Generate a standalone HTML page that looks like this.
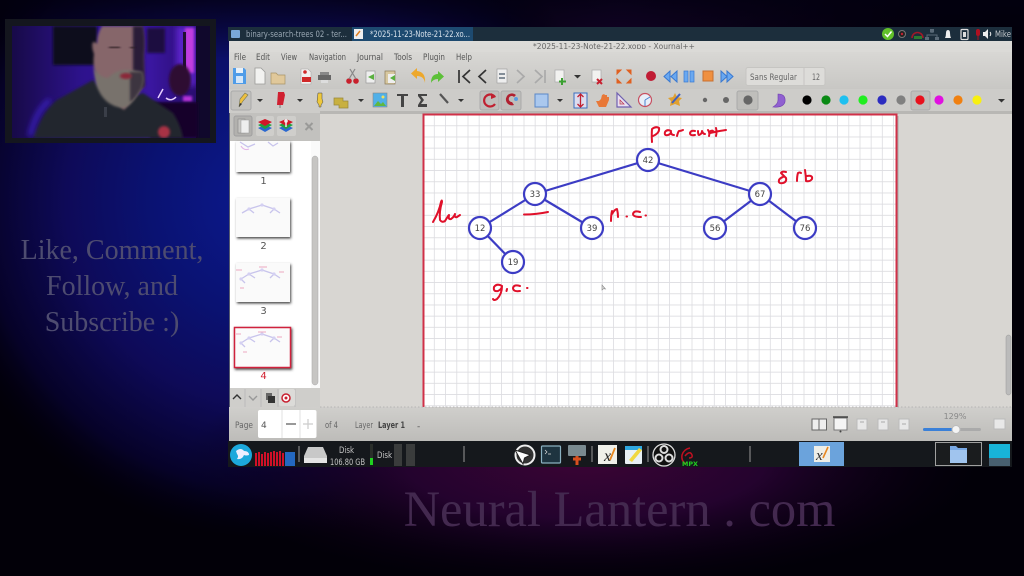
<!DOCTYPE html>
<html><head><meta charset="utf-8"><style>
html,body{margin:0;padding:0;background:#000;width:1024px;height:576px;overflow:hidden}
svg{display:block;position:absolute;left:0;top:0;filter:blur(.35px)}
text{font-family:"DejaVu Sans",sans-serif}
.ui{font-size:9px;fill:#555}
.n{font-size:8.5px;fill:#444;text-anchor:middle}
.h{fill:none;stroke:#e0102a;stroke-width:2;stroke-linecap:round;stroke-linejoin:round}
</style></head><body>
<svg width="1024" height="576" viewBox="0 0 1024 576" xmlns="http://www.w3.org/2000/svg">
<defs>
<radialGradient id="bl" gradientUnits="userSpaceOnUse" cx="270" cy="200" r="340"><stop offset="0" stop-color="#0c1a90"/><stop offset=".35" stop-color="#0a1272"/><stop offset=".6" stop-color="#0e0a58"/><stop offset=".85" stop-color="#060228"/><stop offset="1" stop-color="#020010" stop-opacity="0"/></radialGradient>
<radialGradient id="mr" gradientUnits="userSpaceOnUse" cx="0" cy="0" r="1" gradientTransform="translate(585 462) scale(400 125)"><stop offset="0" stop-color="#3a0434"/><stop offset=".45" stop-color="#24032e"/><stop offset="1" stop-color="#080012" stop-opacity="0"/></radialGradient>
<radialGradient id="tp" gradientUnits="userSpaceOnUse" cx="620" cy="0" r="420"><stop offset="0" stop-color="#1a0530"/><stop offset="1" stop-color="#020008" stop-opacity="0"/></radialGradient>
<linearGradient id="top" x1="0" y1="0" x2="0" y2="1"><stop offset="0" stop-color="#020010" stop-opacity=".75"/><stop offset="1" stop-color="#020010" stop-opacity="0"/></linearGradient>
<linearGradient id="tb" x1="0" y1="0" x2="0" y2="1"><stop offset="0" stop-color="#dddcd9"/><stop offset="1" stop-color="#c8c7c4"/></linearGradient>
<linearGradient id="st" x1="0" y1="0" x2="0" y2="1"><stop offset="0" stop-color="#d0cfcc"/><stop offset="1" stop-color="#bdbcb9"/></linearGradient>
<linearGradient id="cam" x1="0" y1="0" x2="1" y2="0"><stop offset="0" stop-color="#170a48"/><stop offset=".35" stop-color="#2d128c"/><stop offset=".7" stop-color="#3a16a0"/><stop offset="1" stop-color="#240a60"/></linearGradient>
<pattern id="g" width="11.2" height="11.2" patternUnits="userSpaceOnUse" x="423.6" y="115"><rect width="11.2" height="11.2" fill="#fff"/><path d="M11 0V11.2M0 11H11.2" stroke="#dcdce0" stroke-width="1.2"/></pattern>
<filter id="b1" x="-20%" y="-20%" width="140%" height="140%"><feGaussianBlur stdDeviation="1.2"/></filter>
<filter id="b3" x="-30%" y="-30%" width="160%" height="160%"><feGaussianBlur stdDeviation="3"/></filter>
<filter id="sh" x="-10%" y="-10%" width="125%" height="130%"><feDropShadow dx="1" dy="1.5" stdDeviation="1.2" flood-color="#333" flood-opacity=".9"/></filter>
<clipPath id="cc"><rect x="12" y="26" width="198" height="112"/></clipPath>
</defs>

<!-- background -->
<rect width="1024" height="576" fill="#020008"/>
<rect width="1024" height="576" fill="url(#tp)"/>
<rect width="1024" height="576" fill="url(#bl)"/>
<rect width="1024" height="576" fill="url(#mr)"/>
<rect width="1024" height="60" fill="url(#top)"/>

<!-- side text -->
<g font-size="28" fill="#4e4c70" text-anchor="middle">
<text x="112" y="259" style="font-family:'Liberation Serif',serif">Like, Comment,</text>
<text x="112" y="295" style="font-family:'Liberation Serif',serif">Follow, and</text>
<text x="112" y="331" style="font-family:'Liberation Serif',serif">Subscribe :)</text>
</g>
<text x="619.500" y="526" text-anchor="middle" font-size="50.500" fill="#43294f" style="font-family:'Liberation Serif',serif">Neural Lantern . com</text>

<!-- webcam -->
<rect x="5" y="19" width="211" height="124" fill="#14161e"/>
<g clip-path="url(#cc)">
<rect x="12" y="26" width="198" height="112" fill="url(#cam)"/>
<rect x="53" y="26" width="44" height="39" fill="#100a1c" filter="url(#b1)"/>
<rect x="147" y="28" width="18" height="25" fill="#1c0c40" filter="url(#b1)"/>
<rect x="176" y="26" width="20" height="60" fill="#5a20c8" filter="url(#b3)"/>
<rect x="185" y="28" width="9" height="45" fill="#c23ce0" filter="url(#b1)"/>
<rect x="183" y="32" width="3" height="40" fill="#201030"/>
<rect x="196" y="26" width="14" height="112" fill="#10082c"/>
<ellipse cx="180" cy="80" rx="11" ry="16" fill="#2e0a32" filter="url(#b1)"/>
<rect x="183" y="96" width="9" height="6" fill="#b830d8" filter="url(#b1)"/>
<path d="M158 98l5-9M166 98q5 4 10-1" stroke="#e8d0ff" stroke-width="1.500" fill="none"/>
<rect x="150" y="102" width="48" height="36" fill="#12062c" filter="url(#b1)"/>
<path d="M33 138q10-28 24-38l36-20 20 22 30-9 30 20q8 12 10 25z" fill="#22252e" filter="url(#b1)"/>
<path d="M50 100q-14 10-20 36" stroke="#3c24c8" stroke-width="4" fill="none" filter="url(#b3)"/>
<path d="M102 26h40q3 14 1 30l1 30-20 24-24-22-6-20q-1-6 0-14q-3-8-1-12q3 0 4 2q0-10 5-18z" fill="#86666a" filter="url(#b1)"/>
<path d="M133 26h10q3 14 1 30l1 30-12 10z" fill="#2a1a38" filter="url(#b1)"/>
<path d="M94 68q6 10 14 10q8-8 18-8q8 0 16 2q3 10-2 18q-8 16-17 18q-20-2-27-24q-2-10-2-16z" fill="#78726c" filter="url(#b1)"/>
<path d="M130 72l12 0q3 10-2 18q-4 8-10 12z" fill="#3e3640" filter="url(#b1)"/>
<ellipse cx="126" cy="76" rx="6" ry="3" fill="#8a2838" filter="url(#b1)"/>
<path d="M109 47h11M130 48h5" stroke="#2a1c22" stroke-width="2.500" filter="url(#b1)"/>
<ellipse cx="164" cy="132" rx="6" ry="6" fill="#a83044" filter="url(#b1)"/>
<rect x="104" y="107" width="3" height="10" fill="#3a3e48"/>
</g>

<!-- window -->
<rect x="228" y="27" width="784" height="14" fill="#1c2e3c"/>
<rect x="352" y="27" width="121" height="14" fill="#1d4a70"/>
<rect x="231" y="30" width="9" height="8" rx="1" fill="#7aa8d8"/>
<text x="246" y="37" font-size="8.500" fill="#9aa8b4" textLength="101" lengthAdjust="spacingAndGlyphs">binary-search-trees 02 - ter...</text>
<rect x="354" y="29" width="9" height="10" fill="#eee"/><path d="M356 36l4-5" stroke="#e08020" stroke-width="1.500"/>
<text x="370" y="37" font-size="8.500" fill="#d6e0ea" textLength="100" lengthAdjust="spacingAndGlyphs">*2025-11-23-Note-21-22.xo...</text>

<circle cx="888" cy="34" r="6" fill="#62c02a"/><path d="M885 34l2.500 2.500 4-5" stroke="#fff" stroke-width="1.500" fill="none"/>
<circle cx="902" cy="34" r="3.500" fill="#222" stroke="#777"/><circle cx="902" cy="34" r="1.200" fill="#c02030"/>
<path d="M912 38a5.500 5.500 0 0 1 11 0" stroke="#a01828" stroke-width="1.600" fill="none"/><rect x="914" y="36" width="8" height="3" fill="#2a7a30"/>
<path d="M932 33v-3M927 37v-2h10v2" stroke="#5a6a78" fill="none"/><rect x="930" y="29" width="4" height="3.500" fill="#5a6a78"/><rect x="925" y="37" width="4" height="3" fill="#5a6a78"/><rect x="935" y="37" width="4" height="3" fill="#5a6a78"/>
<path d="M945 38q1-2 1-5q0-3 2-3q2 0 2 3q0 3 1 5z" fill="#eee"/>
<rect x="961" y="29.500" width="7" height="10" rx="1" fill="none" stroke="#ddd" stroke-width="1.200"/><rect x="963" y="32" width="3" height="5" fill="#ddd"/>
<rect x="976" y="29" width="4" height="7" rx="2" fill="#b01020"/><path d="M978 36v4" stroke="#b01020"/>
<path d="M983 32h2l3-3v10l-3-3h-2z" fill="#eee"/><path d="M990 32q1.500 2 0 4" stroke="#eee" fill="none"/>
<text x="995" y="37" font-size="9" fill="#c4c8cc" textLength="16" lengthAdjust="spacingAndGlyphs">Mike</text>

<rect x="229" y="41" width="783" height="400" fill="#d6d5d2"/>
<rect x="229" y="41" width="783" height="48" fill="url(#tb)"/>
<rect x="229" y="89" width="783" height="24" fill="#cdccc9"/>
<text x="614" y="49" text-anchor="middle" font-size="7.500" fill="#666">*2025-11-23-Note-21-22.xopp - Xournal++</text>
<rect x="229" y="49" width="783" height="3" fill="#dbdad7"/>

<!-- menu -->
<text x="234" y="60" class="ui" textLength="12" lengthAdjust="spacingAndGlyphs">File</text><text x="256" y="60" class="ui" textLength="14" lengthAdjust="spacingAndGlyphs">Edit</text><text x="281" y="60" class="ui" textLength="16" lengthAdjust="spacingAndGlyphs">View</text><text x="309" y="60" class="ui" textLength="37" lengthAdjust="spacingAndGlyphs">Navigation</text><text x="357" y="60" class="ui" textLength="26" lengthAdjust="spacingAndGlyphs">Journal</text><text x="394" y="60" class="ui" textLength="18" lengthAdjust="spacingAndGlyphs">Tools</text><text x="423" y="60" class="ui" textLength="22" lengthAdjust="spacingAndGlyphs">Plugin</text><text x="456" y="60" class="ui" textLength="16" lengthAdjust="spacingAndGlyphs">Help</text>

<!-- toolbar 1 -->
<path d="M233 68h11l2 2v14h-13z" fill="#4f9ce8"/><rect x="236" y="68" width="7" height="5" fill="#e8f0f8"/><rect x="236" y="76" width="7" height="7" fill="#d4e6f8"/>
<path d="M255 68h6l4 4v12h-10z" fill="#f2f2f0" stroke="#9a9a98" stroke-width=".8"/>
<path d="M271 73h5l2 2h7v9h-14z" fill="#e0c89a" stroke="#a89468" stroke-width=".7"/>
<path d="M301 69h7l3 3v12h-10z" fill="#f2f0ee" stroke="#aaa" stroke-width=".6"/><rect x="302" y="77" width="9" height="5" fill="#d02828"/><circle cx="305" cy="72" r="1.800" fill="#d02828"/>
<rect x="320" y="72" width="9" height="4" fill="#888"/><rect x="318" y="75" width="13" height="5" fill="#666"/><rect x="321" y="80" width="7" height="3" fill="#ddd"/>
<circle cx="349" cy="81" r="2.800" fill="#c8202c"/><circle cx="356" cy="81" r="2.800" fill="#c8202c"/><path d="M349 79l6-10M356 79l-6-10" stroke="#888" stroke-width="1.200"/>
<rect x="366" y="71" width="9" height="12" fill="#eee" stroke="#999" stroke-width=".7"/><path d="M368 77l6-3v6z" fill="#5ab040"/>
<rect x="385" y="71" width="10" height="13" fill="#d8c8a0" stroke="#8a7a58" stroke-width=".7"/><rect x="388" y="74" width="7" height="9" fill="#eee"/><path d="M390 78l5-3v6z" fill="#5ab040"/>
<path d="M425 83q-1-7-8-7v3l-6-5.500 6-5.500v3q9 1 8 12z" fill="#eda82c"/>
<path d="M431 83q0-9 7-9v-3l6 5.500-6 5.500v-3q-5 0-7 4z" fill="#5cc038"/>
<path d="M459 70v13M470 70l-7 6.500 7 6.500" stroke="#333" stroke-width="1.700" fill="none"/>
<path d="M486 70l-7 6.500 7 6.500" stroke="#333" stroke-width="1.700" fill="none"/>
<rect x="497" y="69" width="10" height="14" fill="#eee" stroke="#999" stroke-width=".6"/><path d="M499 74h6M499 78h6" stroke="#456" stroke-width="1.200"/>
<path d="M517 70l7 6.500-7 6.500" stroke="#aaa" stroke-width="1.700" fill="none"/>
<path d="M535 70l7 6.500-7 6.500M545 70v13" stroke="#aaa" stroke-width="1.700" fill="none"/>
<rect x="555" y="70" width="9" height="12" fill="#f2f2f0" stroke="#aaa" stroke-width=".7"/><path d="M562 78v7M559 81.500h7" stroke="#3aa030" stroke-width="2"/>
<path d="M574 75h7l-3.500 3.500z" fill="#333"/>
<rect x="592" y="70" width="9" height="12" fill="#f2f2f0" stroke="#aaa" stroke-width=".7"/><path d="M597 79l5 5M602 79l-5 5" stroke="#c82030" stroke-width="2"/>
<path d="M617 70h4l-4 4zM631 70h-4l4 4zM617 83h4l-4-4zM631 83h-4l4-4z" fill="#e06020" stroke="#e06020"/>
<circle cx="651" cy="76" r="5" fill="#c01c34"/>
<path d="M670 71v11l-6-5.500zM677 71v11l-6-5.500z" fill="#6aa8f0" stroke="#3878d0"/>
<rect x="684" y="71" width="4" height="11" fill="#6aa8f0" stroke="#3878d0" stroke-width=".7"/><rect x="690" y="71" width="4" height="11" fill="#6aa8f0" stroke="#3878d0" stroke-width=".7"/>
<rect x="703" y="71" width="10" height="10" fill="#f09040" stroke="#c87030"/>
<path d="M721 71v11l6-5.500zM727 71v11l6-5.500z" fill="#6aa8f0" stroke="#3878d0"/>
<rect x="746" y="67.500" width="79" height="18" rx="2" fill="#dddcd9" stroke="#c6c5c2"/><path d="M804 68v17" stroke="#c6c5c2"/>
<text x="750" y="80" font-size="9" fill="#666" textLength="47" lengthAdjust="spacingAndGlyphs">Sans Regular</text><text x="812" y="80" font-size="9" fill="#666" textLength="8" lengthAdjust="spacingAndGlyphs">12</text>

<!-- toolbar 2 -->
<rect x="231" y="91" width="20" height="19" rx="2" fill="#c2c1be" stroke="#aaa"/>
<path d="M239 107l1-8 5-6 3 2-5 6z" fill="#eec040" stroke="#775" stroke-width=".6"/><path d="M239 107l1-4 2 1z" fill="#333"/>
<path d="M257 99h6l-3 3zM297 99h6l-3 3zM358 99h6l-3 3zM458 99h6l-3 3zM557 99h6l-3 3zM998 99h7l-3.500 3.500z" fill="#333"/>
<path d="M278 92h6l1 3-2 10h-6z" fill="#d02030"/><path d="M280 105v3" stroke="#777"/>
<path d="M318 93h4v6l1 3-2 3v2h-2v-2l-2-3z" fill="#eec83c" stroke="#444" stroke-width=".5"/>
<path d="M334 98h9v3h5v7h-9v-3h-5z" fill="#c8b040" stroke="#98883a" stroke-width=".7"/>
<rect x="373" y="93" width="14" height="14" fill="#50b0e8" stroke="#888" stroke-width=".6"/><path d="M374 106l4-5 3 3 2-2 3 4z" fill="#60b840"/><circle cx="383" cy="97" r="1.500" fill="#f0e060"/>
<path d="M397 94h11v2h-4v11h-3v-11h-4z" fill="#444"/>
<path d="M418 94h9v2h-6l3 4-3 4h6v3h-9v-2l3-5-3-4z" fill="#444"/>
<path d="M440 94l8 9" stroke="#555" stroke-width="2.200"/>
<rect x="480" y="91" width="19" height="19" rx="2" fill="#bfbebb" stroke="#aaa"/><rect x="501" y="91" width="20" height="19" rx="2" fill="#bfbebb" stroke="#aaa"/>
<path d="M495 97a6 6 0 1 0 0 7" fill="none" stroke="#c02030" stroke-width="2.200"/><path d="M491 93l5 4-5 2z" fill="#c02030"/>
<path d="M516 95a6 6 0 1 0 -2 10l-2-3a3 3 0 1 1 2-5z" fill="#b02030"/><circle cx="516" cy="99" r="2" fill="#5a9ce0"/>
<rect x="535" y="94" width="13" height="13" fill="#aac8ee" stroke="#5a88c8"/>
<rect x="574" y="93" width="13" height="15" fill="#dde" stroke="#3a70c0"/><path d="M580.500 94v13M577.500 97l3-3 3 3M577.500 104l3 3 3-3" stroke="#c02030" stroke-width="1.300" fill="none"/>
<path d="M596 101l3 6h7l3-7v-3l-2 0v-2l-2 0-1-1-2 1-1 4-2 2z" fill="#e87838"/>
<path d="M617 93v14h14z" fill="#e8e0f0" stroke="#7060b0" stroke-width="1.200"/><path d="M620 100v4h4z" fill="#d8d6d2" stroke="#c03050" stroke-width=".7"/>
<circle cx="645" cy="100" r="6.500" fill="#e8eef8" stroke="#c85060" stroke-width="1.200"/><path d="M645 100l5-3M645 100v6" stroke="#4a80d0"/>
<path d="M675 93l2 4 5 1-3 3 1 5-5-2-5 2 1-5-3-3 5-1z" fill="#e0a030"/><path d="M672 103l8-9" stroke="#4060c0" stroke-width="2"/>
<circle cx="705" cy="100" r="2.200" fill="#666"/><circle cx="726" cy="100" r="3" fill="#666"/>
<rect x="737" y="91" width="21" height="19" rx="2" fill="#bfbebb" stroke="#aaa"/><circle cx="748" cy="100" r="4.600" fill="#666"/>
<path d="M778 94q8 0 7 8q-2 6-12 5q5-3 5-7z" fill="#9060d0" stroke="#7040b0" stroke-width=".6"/>
<rect x="911" y="91" width="19" height="19" rx="2" fill="#bfbebb" stroke="#aaa"/>
<circle cx="807" cy="100" r="4.600" fill="#000"/><circle cx="826" cy="100" r="4.600" fill="#0a8a14"/><circle cx="844" cy="100" r="4.600" fill="#1ec0f0"/><circle cx="863" cy="100" r="4.600" fill="#20ee20"/><circle cx="882" cy="100" r="4.600" fill="#2c2cc0"/><circle cx="901" cy="100" r="4.600" fill="#808080"/><circle cx="920" cy="100" r="4.600" fill="#e8101c"/><circle cx="939" cy="100" r="4.600" fill="#e010e0"/><circle cx="958" cy="100" r="4.600" fill="#f08010"/><circle cx="977" cy="100" r="4.600" fill="#f8f010"/>

<!-- canvas area -->
<rect x="320" y="113" width="692" height="294" fill="#d8d6d2"/>
<rect x="320" y="111" width="692" height="3" fill="#b8b7b4"/>
<rect x="423" y="115" width="474" height="292" fill="url(#g)"/>
<path d="M423.500 407V114.500H896.500V407" fill="none" stroke="#d03048" stroke-width="2"/>
<path d="M898 116V407" stroke="#aaa" stroke-width="1"/>

<!-- tree -->
<g fill="none" stroke="#3c3cc4" stroke-width="2.200">
<path d="M648 160L535 194M648 160L760 194M535 194L480 228M535 194L592 228M760 194L715 228M760 194L805 228M480 228L513 262"/>
<g fill="#fff">
<circle cx="648" cy="160" r="11"/><circle cx="535" cy="194" r="11"/><circle cx="760" cy="194" r="11"/><circle cx="480" cy="228" r="11"/><circle cx="592" cy="228" r="11"/><circle cx="715" cy="228" r="11"/><circle cx="805" cy="228" r="11"/><circle cx="513" cy="262" r="11"/>
</g></g>
<text class="n" x="648" y="163">42</text><text class="n" x="535" y="197">33</text><text class="n" x="760" y="197">67</text><text class="n" x="480" y="231">12</text><text class="n" x="592" y="231">39</text><text class="n" x="715" y="231">56</text><text class="n" x="805" y="231">76</text><text class="n" x="513" y="265">19</text>

<!-- handwriting -->
<g class="h">
<path d="M433 222q6-10 8-20q1-3 1 0q-3 10-2 18q2 3 5 1q3-5 4-6q-1 5 2 4q3-2 4-5q-1 4 2 3l3-2"/>
<path d="M524 214.500q12 0 24-2.500"/>
<path d="M611 221q0-6 1-10M612 214q3-5 5-5q1 4 1 8"/><path d="M626.500 216.500h.5M645.500 215.500h.5"/>
<path d="M640 212q-6-2-7 2q0 3 8 3"/>
<path d="M502 286q-5-3-8 1q-1 5 4 4q4-2 4-5q0 8-5 13q-3 2-4 0"/><path d="M507 289l-.5 2M527 288h.5"/>
<path d="M520 286q-6-2-7 2q0 4 7 3"/>
<path d="M652 142q-.5-7 0-13q4-3 7-1q1 5-6 8"/>
<path d="M671 131q-4-2-6 1q-1 4 3 3q3-1 3-3q0 3 3 3"/>
<path d="M677 136q1-4 2-5q2 0 4-1"/>
<path d="M695 131q-4-1-5 2q0 3 5 2"/>
<path d="M698 131q0 4 1 4q3-1 3-4q1 3 3 3"/>
<path d="M708 130q2 3 1 6M709 132q3-2 4-1"/>
<path d="M716 136q1-4 0-8M710 133q8-2 16-3"/>
<path d="M786 172q-4-1-5 1q2 2 5 5q1 4-3 5q-5 1-4-3q1-2 4-3"/>
<path d="M797 181q0-5 1-8q2-1 3 0"/>
<path d="M805 170q1 6 1 11q4 1 6-2q1-4-5-3"/>
</g>
<path d="M602 285l0 5 1.500-1.300 2 .3z" fill="#ddd" stroke="#888" stroke-width=".6"/>

<!-- side panel -->
<rect x="229" y="113" width="91" height="28" fill="#c2c1be"/>
<rect x="234" y="116" width="18" height="20" rx="2" fill="#b2b1ae" stroke="#a0a0a0"/>
<rect x="238" y="119" width="7" height="14" fill="#c6c5c2" stroke="#888" stroke-width=".6"/><rect x="241" y="120" width="8" height="13" fill="#eee" stroke="#999" stroke-width=".5"/>
<rect x="256" y="116" width="18" height="20" rx="2" fill="#cfcecb"/><rect x="277" y="116" width="19" height="20" rx="2" fill="#cfcecb"/>
<path d="M258 128l7-3 7 3-7 4z" fill="#2a68d0"/><path d="M258 125l7-3 7 3-7 4z" fill="#20a040"/><path d="M258 122l7-3 7 3-7 4z" fill="#d01828"/>
<path d="M279 128l7-3 7 3-7 4z" fill="#2a68d0"/><path d="M279 125l7-3 7 3-7 4z" fill="#20a040"/><path d="M279 122l7-3 7 3-7 4z" fill="#d01828"/><path d="M286 119v8" stroke="#eee" stroke-width="1.500"/><circle cx="286" cy="121" r="1.800" fill="#eee"/>
<path d="M305.500 123l7 7M312.500 123l-7 7" stroke="#9a9a98" stroke-width="2"/>
<rect x="230" y="141" width="90" height="247" fill="#fff"/>
<path d="M229.500 113V408" stroke="#555a70" stroke-width="1"/>
<rect x="311" y="141" width="9" height="247" fill="#fafafa"/>
<rect x="312" y="156" width="6" height="229" rx="3" fill="#c6c5c3" stroke="#aaa" stroke-width=".5"/>
<g>
<rect x="236" y="141" width="54" height="31" fill="#fafafa" filter="url(#sh)"/>
<rect x="236" y="198" width="54" height="39" fill="#fafafa" filter="url(#sh)"/>
<rect x="236" y="263" width="54" height="39" fill="#fafafa" filter="url(#sh)"/>
<rect x="234.500" y="327.500" width="56" height="40" fill="#fbfbfb" stroke="#d0203c" stroke-width="1.500" filter="url(#sh)"/>
<g fill="none" stroke="#c8c4ec" stroke-width="1.300">
<path d="M240 142l8 5 7-3M268 142l5 4 5-3"/>
<path d="M262 205l-13 4-7 4M262 205l12 4 6 4M249 209l5 4M274 209l-4 4"/>
<path d="M262 270l-13 4-8 5M262 270l12 4 6 4M249 274l6 4M274 274l-4 4M241 279l4 4"/>
<path d="M262 334l-13 4-8 5M262 334l12 4 6 4M249 338l6 4M274 338l-4 4M241 343l4 4"/>
</g>
<g fill="#d4d0f2"><circle cx="262" cy="205" r="1.600"/><circle cx="249" cy="209" r="1.600"/><circle cx="274" cy="209" r="1.600"/><circle cx="262" cy="270" r="1.600"/><circle cx="249" cy="274" r="1.600"/><circle cx="274" cy="274" r="1.600"/><circle cx="241" cy="279" r="1.600"/><circle cx="262" cy="334" r="1.600"/><circle cx="249" cy="338" r="1.600"/><circle cx="274" cy="338" r="1.600"/><circle cx="241" cy="343" r="1.600"/></g>
<path d="M236 270h6M240 288h4M259 267h8M279 272h5M236 334h5M243 352h4M258 332h8M277 337h5" stroke="#eca8c0" stroke-width="1"/>
<path d="M241 146q3 5 8 3" stroke="#e4b8e8" stroke-width="1.200" fill="none"/>
</g>
<g font-size="10" fill="#555" text-anchor="middle">
<text x="263.500" y="184">1</text><text x="263.500" y="249">2</text><text x="263.500" y="314">3</text><text x="263.500" y="379" fill="#d02030">4</text>
</g>
<rect x="230" y="388" width="90" height="20" fill="#cfcecb"/>
<path d="M245 389v18M261 389v18M278 389v18M295 389v18" stroke="#bbb"/>
<path d="M233 399l4-4 4 4" stroke="#333" stroke-width="1.400" fill="none"/><path d="M249 396l4 4 4-4" stroke="#999" stroke-width="1.400" fill="none"/>
<rect x="266" y="393" width="6" height="7" fill="#666"/><rect x="268" y="396" width="7" height="7" fill="#333"/>
<rect x="279" y="389" width="16" height="17" rx="2" fill="#dcdbd8"/><circle cx="286" cy="398" r="4" fill="#fff" stroke="#c82030" stroke-width="1.500"/><circle cx="286" cy="398" r="1.500" fill="#c82030"/>

<!-- status bar -->
<rect x="229" y="407" width="783" height="34" fill="url(#st)"/>
<rect x="258" y="410" width="58.500" height="28" rx="2" fill="#fff"/>
<path d="M282 410v28M300 410v28" stroke="#e2e2e2"/>
<path d="M286 424h10" stroke="#555" stroke-width="1.200"/><path d="M303 424h10M308 419v10" stroke="#ccc" stroke-width="1.200"/>
<text x="235" y="428" class="ui" style="fill:#666" textLength="18" lengthAdjust="spacingAndGlyphs">Page</text>
<text x="261" y="428" class="ui" style="fill:#555">4</text>
<text x="325" y="428" class="ui" style="fill:#666" textLength="13" lengthAdjust="spacingAndGlyphs">of 4</text>
<text x="355" y="428" class="ui" style="fill:#666" textLength="18" lengthAdjust="spacingAndGlyphs">Layer</text>
<text x="378" y="428" font-size="9" font-weight="bold" fill="#444" textLength="27" lengthAdjust="spacingAndGlyphs">Layer 1</text>
<text x="417" y="429" class="ui" style="fill:#555">-</text>
<rect x="812" y="419" width="7" height="11" fill="#eee" stroke="#666" stroke-width="1"/><rect x="819" y="419" width="7.500" height="11" fill="#eee" stroke="#666" stroke-width="1"/>
<rect x="834" y="418" width="13" height="12" fill="#f4f4f4" stroke="#777"/><path d="M833 417h15" stroke="#444" stroke-width="1.500"/><circle cx="840.500" cy="431.500" r="1" fill="#444"/>
<rect x="857" y="419" width="10" height="11" fill="#e8e8e8" stroke="#bbb"/><rect x="878" y="419" width="10" height="11" fill="#e8e8e8" stroke="#bbb"/><rect x="899" y="419" width="10" height="11" fill="#e8e8e8" stroke="#bbb"/>
<path d="M860 422h4M881 422h4M902 424h4" stroke="#aaa"/>
<text x="955" y="419" text-anchor="middle" font-size="8" fill="#888">129%</text>
<rect x="923" y="428" width="58" height="3" rx="1.500" fill="#aaa"/><rect x="923" y="428" width="33" height="3" rx="1.500" fill="#3a80d8"/>
<circle cx="956" cy="429.500" r="4" fill="#f4f4f4" stroke="#bbb"/>
<rect x="994" y="419" width="11" height="10" fill="#e8e8e8" stroke="#bbb"/>
<path d="M320 407H1012" stroke="#aaa" stroke-width=".7" stroke-dasharray="1.500 2"/>
<rect x="1006" y="335" width="5" height="60" rx="2.500" fill="#bbb" stroke="#999" stroke-width=".5"/>

<!-- taskbar -->
<rect x="228" y="441" width="784" height="26" fill="#15181c"/>
<circle cx="241" cy="455" r="11" fill="#1ca8dc"/><path d="M236 451q5-4 8 0q5 0 5 4q-3 1-5 0q-2 5-7 4q2-3 0-5z" fill="#eef"/>
<g fill="#d01028"><rect x="255" y="453" width="2" height="13"/><rect x="258" y="452" width="2" height="14"/><rect x="261" y="454" width="2" height="12"/><rect x="264" y="452" width="2" height="14"/><rect x="267" y="453" width="2" height="13"/><rect x="270" y="452" width="2" height="14"/><rect x="273" y="451" width="2" height="15"/><rect x="276" y="452" width="2" height="14"/><rect x="279" y="451" width="2" height="15"/><rect x="282" y="453" width="2" height="13"/></g>
<rect x="285" y="452" width="10" height="14" fill="#2468c0"/>
<path d="M299 446v16M464 446v16M592 446v16M648 446v16M750 446v16" stroke="#999" stroke-width="1"/>
<path d="M308 447h15l4 9v7h-23v-7z" fill="#c8c8c8"/><rect x="304" y="458" width="23" height="5" fill="#e4e4e4"/>
<text x="339" y="453" font-size="8.500" fill="#c4c4c4" textLength="15" lengthAdjust="spacingAndGlyphs">Disk</text>
<text x="330" y="465" font-size="8.500" fill="#c4c4c4" textLength="35" lengthAdjust="spacingAndGlyphs">106.80 GB</text>
<rect x="370" y="444" width="3" height="21" fill="#2a2e2a"/><rect x="370" y="458" width="3" height="7" fill="#20d020"/>
<text x="377" y="458" font-size="8.500" fill="#c4c4c4" textLength="15" lengthAdjust="spacingAndGlyphs">Disk</text>
<rect x="394" y="444" width="8" height="22" fill="#3a3c3c"/><rect x="406" y="444" width="9" height="22" fill="#3a3c3c"/>
<circle cx="525" cy="455" r="9.500" fill="#333" stroke="#eee" stroke-width="2"/><path d="M515 450l8 14 1.500-6 6-3z" fill="#fff" stroke="#222"/>
<rect x="541.500" y="446" width="19" height="17" rx="1" fill="#1e3440" stroke="#8ab0c0" stroke-width="1.200"/><path d="M545 450l2 2-2 2M548 454h3" stroke="#ddd" stroke-width=".7" fill="none"/>
<rect x="568" y="445" width="18" height="11" rx="1" fill="#7a8a90"/><path d="M577 456v9M573 459h8" stroke="#d85020" stroke-width="3"/>
<rect x="598" y="445" width="19" height="19" fill="#f0f0ea"/><text x="604" y="461" font-size="16" font-style="italic" fill="#222" style="font-family:'Liberation Serif',serif">x</text><path d="M610 460l5-12" stroke="#e88820" stroke-width="1.800"/>
<rect x="625" y="446" width="17" height="18" rx="1" fill="#e8f0f4"/><rect x="625" y="446" width="17" height="4" fill="#30a8e0"/><path d="M629 460l10-12 3 2-10 12z" fill="#f0d840"/>
<circle cx="664" cy="455" r="11" fill="#111" stroke="#ddd" stroke-width="1.300"/><g fill="none" stroke="#ddd" stroke-width="2"><circle cx="664" cy="449.500" r="3.500"/><circle cx="659" cy="458" r="3.500"/><circle cx="669" cy="458" r="3.500"/></g>
<path d="M690 448q-6 1-8 7q-1 6 4 9M685 456q5-6 7-1q1 3-3 3" stroke="#c01020" stroke-width="1.500" fill="none"/>
<text x="682" y="466" font-size="6.500" font-weight="bold" fill="#20d020" textLength="16" lengthAdjust="spacingAndGlyphs">MPX</text>
<rect x="799" y="442" width="45" height="24" fill="#6ba3dc"/><rect x="814" y="446" width="16" height="16" fill="#eeeee8"/><text x="816" y="460" font-size="15" font-style="italic" fill="#333" style="font-family:'Liberation Serif',serif">x</text><path d="M823 458l5-11" stroke="#e88820" stroke-width="1.600"/>
<rect x="935.500" y="442.500" width="46" height="23" fill="#1a1c1e" stroke="#a0a0a0" stroke-width="1"/>
<path d="M950 446h6l2 2h9v15h-17z" fill="#78a8e4"/><rect x="950" y="450" width="17" height="13" fill="#a0c4ee"/>
<rect x="989" y="444" width="21" height="14" fill="#18b4d8"/><rect x="989" y="458" width="21" height="8" fill="#486070"/>
</svg>
</body></html>
